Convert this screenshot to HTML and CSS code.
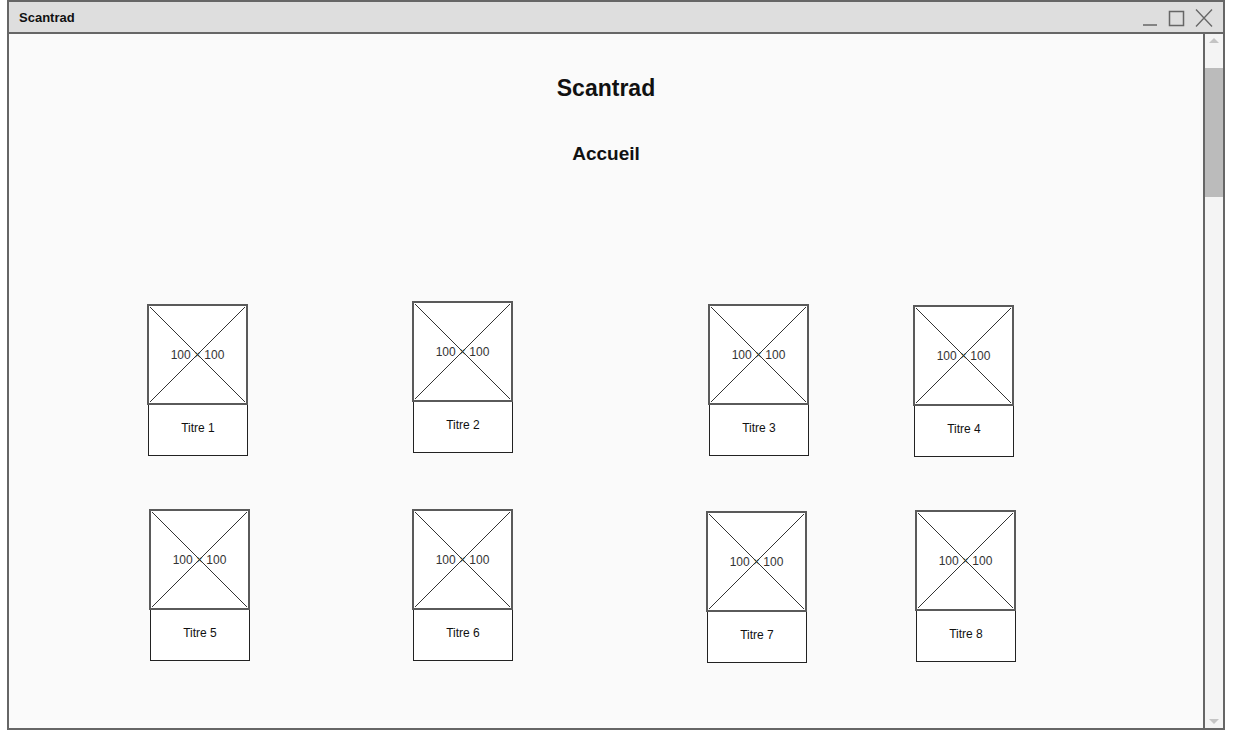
FILE: index.html
```html
<!DOCTYPE html>
<html lang="fr">
<head>
<meta charset="utf-8">
<title>Scantrad</title>
<link rel="stylesheet" href="styles.css">
</head>
<body>
<div class="window">
  <div class="titlebar">
    <span class="titlebar-text">Scantrad</span>
    <div class="controls">
      <svg class="ctl" width="16" height="20" viewBox="0 0 16 20"><line x1="1" y1="17" x2="15" y2="17" stroke="#666" stroke-width="1.5"/></svg>
      <svg class="ctl" width="17" height="20" viewBox="0 0 17 20"><rect x="1.5" y="3.5" width="14" height="14" fill="none" stroke="#666" stroke-width="1.5"/></svg>
      <svg class="ctl" width="18" height="20" viewBox="0 0 18 20"><path d="M1 1.5 L17 18.5 M17 1.5 L1 18.5" stroke="#666" stroke-width="1.3" fill="none"/></svg>
    </div>
  </div>
  <div class="body">
    <main class="content">
      <h1 class="site-title">Scantrad</h1>
      <h2 class="page-title">Accueil</h2>
      <div class="grid">
        <div class="card c1">
          <div class="thumb"><svg class="x" viewBox="0 0 100 100" preserveAspectRatio="none"><path d="M0 0 L100 100 M100 0 L0 100" stroke="#333" stroke-width="1" vector-effect="non-scaling-stroke"/></svg><span class="thumb-label">100 × 100</span></div>
          <div class="caption">Titre 1</div>
        </div>
        <div class="card c2">
          <div class="thumb"><svg class="x" viewBox="0 0 100 100" preserveAspectRatio="none"><path d="M0 0 L100 100 M100 0 L0 100" stroke="#333" stroke-width="1" vector-effect="non-scaling-stroke"/></svg><span class="thumb-label">100 × 100</span></div>
          <div class="caption">Titre 2</div>
        </div>
        <div class="card c3">
          <div class="thumb"><svg class="x" viewBox="0 0 100 100" preserveAspectRatio="none"><path d="M0 0 L100 100 M100 0 L0 100" stroke="#333" stroke-width="1" vector-effect="non-scaling-stroke"/></svg><span class="thumb-label">100 × 100</span></div>
          <div class="caption">Titre 3</div>
        </div>
        <div class="card c4">
          <div class="thumb"><svg class="x" viewBox="0 0 100 100" preserveAspectRatio="none"><path d="M0 0 L100 100 M100 0 L0 100" stroke="#333" stroke-width="1" vector-effect="non-scaling-stroke"/></svg><span class="thumb-label">100 × 100</span></div>
          <div class="caption">Titre 4</div>
        </div>
        <div class="card c5">
          <div class="thumb"><svg class="x" viewBox="0 0 100 100" preserveAspectRatio="none"><path d="M0 0 L100 100 M100 0 L0 100" stroke="#333" stroke-width="1" vector-effect="non-scaling-stroke"/></svg><span class="thumb-label">100 × 100</span></div>
          <div class="caption">Titre 5</div>
        </div>
        <div class="card c6">
          <div class="thumb"><svg class="x" viewBox="0 0 100 100" preserveAspectRatio="none"><path d="M0 0 L100 100 M100 0 L0 100" stroke="#333" stroke-width="1" vector-effect="non-scaling-stroke"/></svg><span class="thumb-label">100 × 100</span></div>
          <div class="caption">Titre 6</div>
        </div>
        <div class="card c7">
          <div class="thumb"><svg class="x" viewBox="0 0 100 100" preserveAspectRatio="none"><path d="M0 0 L100 100 M100 0 L0 100" stroke="#333" stroke-width="1" vector-effect="non-scaling-stroke"/></svg><span class="thumb-label">100 × 100</span></div>
          <div class="caption">Titre 7</div>
        </div>
        <div class="card c8">
          <div class="thumb"><svg class="x" viewBox="0 0 100 100" preserveAspectRatio="none"><path d="M0 0 L100 100 M100 0 L0 100" stroke="#333" stroke-width="1" vector-effect="non-scaling-stroke"/></svg><span class="thumb-label">100 × 100</span></div>
          <div class="caption">Titre 8</div>
        </div>
      </div>
    </main>
    <div class="scrollbar">
      <svg class="arrow" width="18" height="12" viewBox="0 0 18 12"><polygon points="4,9 14,9 9,4" fill="#c4c4c4"/></svg>
      <div class="thumb-bar"></div>
      <div class="track-rest"></div>
      <svg class="arrow" width="18" height="12" viewBox="0 0 18 12"><polygon points="4,3 14,3 9,8" fill="#c4c4c4"/></svg>
    </div>
  </div>
</div>
</body>
</html>
```

FILE: styles.css
```css
* { box-sizing: border-box; }

html, body {
  margin: 0;
  padding: 0;
  background: #ffffff;
  font-family: "Liberation Sans", Arial, sans-serif;
}

.window {
  margin-left: 7px;
  width: 1218px;
  height: 730px;
  border: 2px solid #666666;
  display: flex;
  flex-direction: column;
  background: #fafafa;
}

.titlebar {
  height: 32px;
  flex: none;
  background: #dedede;
  border-bottom: 2px solid #666666;
  display: flex;
  align-items: center;
  justify-content: space-between;
  padding-left: 10px;
  padding-right: 10px;
}

.titlebar-text {
  font-weight: bold;
  font-size: 13px;
  color: #111;
}

.controls {
  display: flex;
  align-items: center;
  gap: 10px;
  padding-top: 2px;
}

.ctl { display: block; }

.body {
  flex: 1;
  display: flex;
  min-height: 0;
}

.content {
  flex: 1;
  display: flex;
  flex-direction: column;
  align-items: center;
  padding-top: 40px;
}

.site-title {
  margin: 0;
  font-size: 23px;
  line-height: 28px;
  font-weight: bold;
  color: #111;
}

.page-title {
  margin: 40px 0 0;
  font-size: 19px;
  line-height: 24px;
  font-weight: bold;
  color: #111;
}

.grid {
  align-self: stretch;
  margin-top: 135px;
  padding-left: 138px;
  display: grid;
  grid-template-columns: 101px 164px 101px 193px 101px 106px 101px;
  grid-template-rows: 155px 155px;
  row-gap: 53px;
  align-items: start;
}

.card { width: 101px; }

.c1 { grid-column: 1; grid-row: 1; margin-top: 3px; }
.c2 { grid-column: 3; grid-row: 1; margin-top: 0; }
.c3 { grid-column: 5; grid-row: 1; margin-top: 3px; margin-left: 2px; }
.c4 { grid-column: 7; grid-row: 1; margin-top: 4px; }
.c5 { grid-column: 1; grid-row: 2; margin-left: 2px; }
.c6 { grid-column: 3; grid-row: 2; }
.c7 { grid-column: 5; grid-row: 2; margin-top: 2px; }
.c8 { grid-column: 7; grid-row: 2; margin-top: 1px; margin-left: 2px; }

.thumb {
  position: relative;
  width: 101px;
  height: 101px;
  background: #ffffff;
  border: 2px solid #5a5a5a;
  display: flex;
  align-items: center;
  justify-content: center;
}

.x {
  position: absolute;
  inset: 1px;
  width: calc(100% - 2px);
  height: calc(100% - 2px);
}

.thumb-label {
  position: relative;
  font-size: 12px;
  color: #333333;
  line-height: 14px;
}

.caption {
  margin-left: 1px;
  width: 100px;
  height: 51px;
  background: #ffffff;
  border: 1px solid #222222;
  border-top: none;
  font-size: 12px;
  color: #111;
  text-align: center;
  padding-top: 16px;
  line-height: 14px;
}

.scrollbar {
  width: 20px;
  flex: none;
  border-left: 2px solid #666666;
  background: #f4f4f4;
  display: flex;
  flex-direction: column;
}

.arrow {
  display: block;
  flex: none;
}

.thumb-bar {
  margin-top: 22px;
  height: 129px;
  background: #bbbbbb;
  flex: none;
}

.track-rest { flex: 1; }
```
